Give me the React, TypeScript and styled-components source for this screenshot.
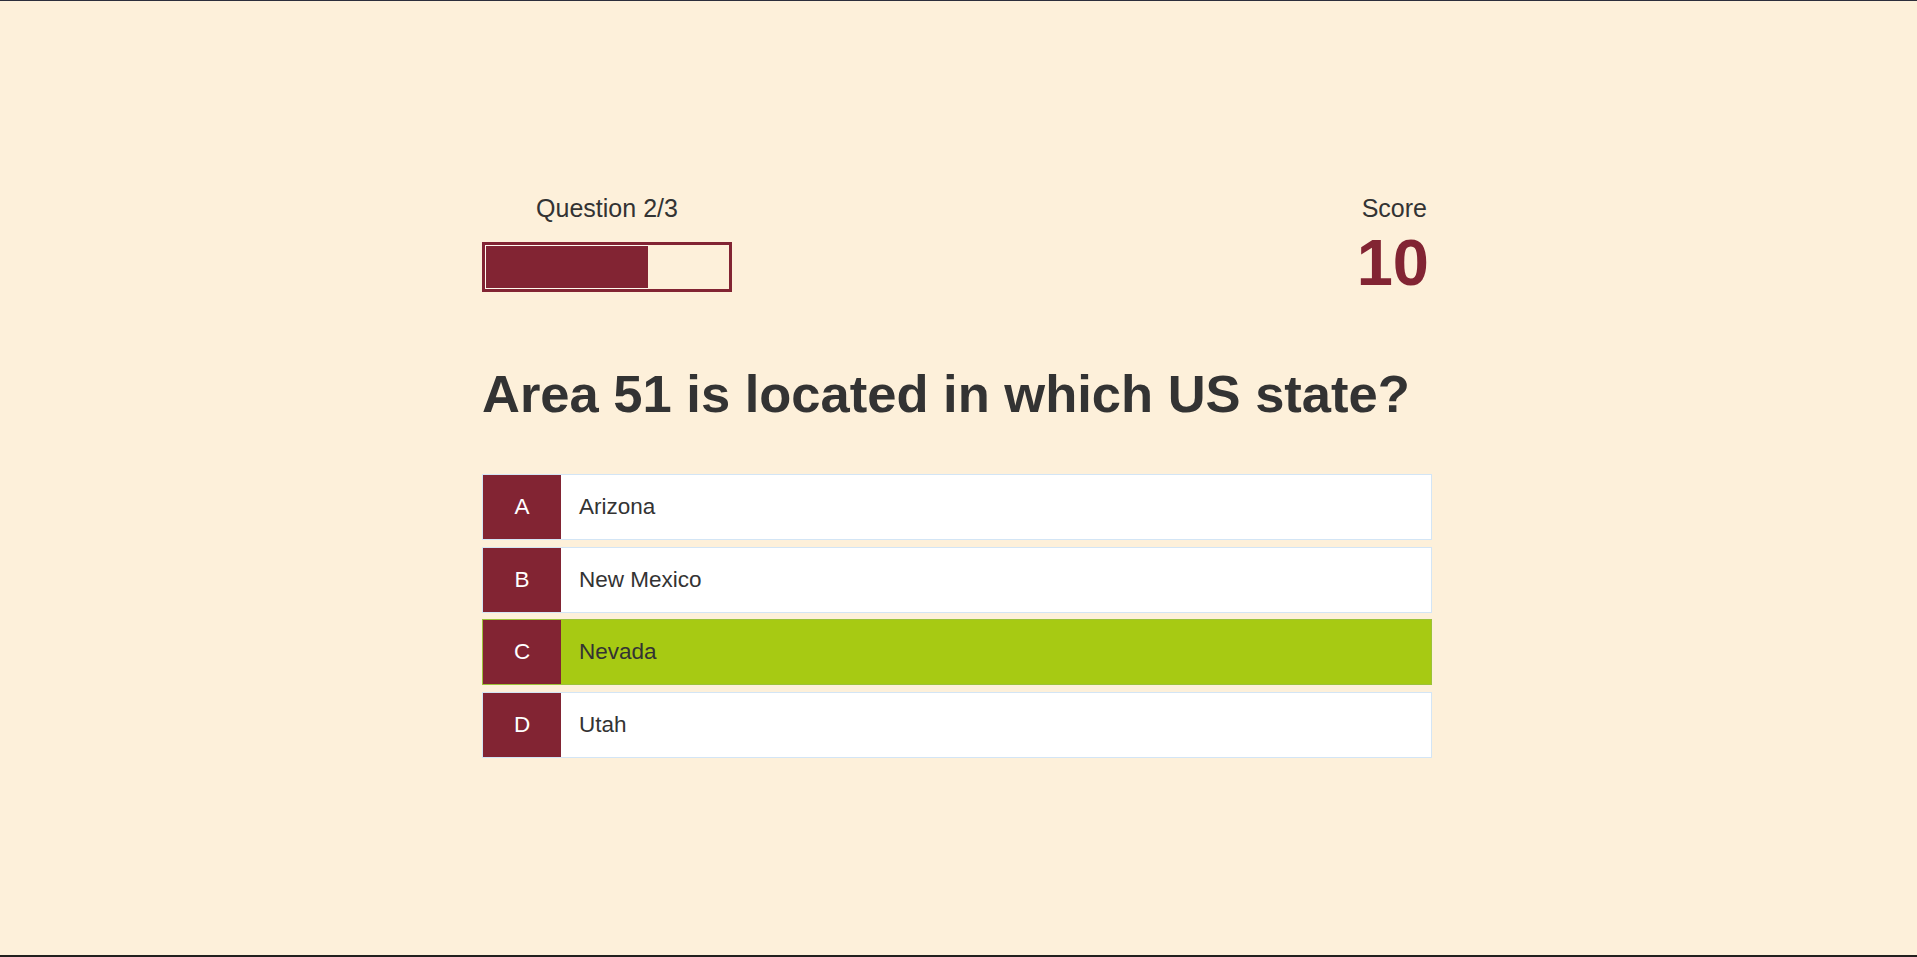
import { ReactElement } from 'react';
import styled, { createGlobalStyle } from 'styled-components';

interface IAnswer {
    letter: string;
    text: string;
    correct?: boolean;
}

const answers: IAnswer[] = [
    { letter: 'A', text: 'Arizona' },
    { letter: 'B', text: 'New Mexico' },
    { letter: 'C', text: 'Nevada', correct: true },
    { letter: 'D', text: 'Utah' },
];

const current = 2;
const total = 3;
const score = 10;

export default function App(): ReactElement {
    return (
        <>
            <GlobalStyle />
            <Page>
                <Quiz>
                    <Header>
                        <ProgressBlock>
                            <Label>Question {current}/{total}</Label>
                            <Track>
                                <Fill style={{ width: `${(current / total) * 100}%` }} />
                            </Track>
                        </ProgressBlock>
                        <ScoreBlock>
                            <ScoreLabel>Score</ScoreLabel>
                            <ScoreValue>{score}</ScoreValue>
                        </ScoreBlock>
                    </Header>
                    <Question>Area 51 is located in which US state?</Question>
                    <AnswerList>
                        {
                            answers.map(answer => (
                                <AnswerRow key={answer.letter} $correct={answer.correct}>
                                    <Letter>{answer.letter}</Letter>
                                    <AnswerText>{answer.text}</AnswerText>
                                </AnswerRow>
                            ))
                        }
                    </AnswerList>
                </Quiz>
            </Page>
        </>
    );
}

const GlobalStyle = createGlobalStyle`
html, body {
    margin: 0;
    padding: 0;
    background: #fdf0da;
    font-family: "Liberation Sans", Arial, sans-serif;
    color: #333;
}
`;

const Page = styled.div`
box-sizing: border-box;
height: 957px;
padding-right: 3px;
border-top: 1px solid #2c2e3b;
border-bottom: 2px solid #22201e;
background: #fdf0da;
overflow: hidden;
`;

const Quiz = styled.div`
width: 950px;
margin: 0 auto;
padding-top: 193px;
`;

const Header = styled.div`
display: flex;
justify-content: space-between;
align-items: flex-start;
`;

const ProgressBlock = styled.div`
display: flex;
flex-direction: column;
align-items: center;
width: 250px;
gap: 20px;
`;

const Label = styled.div`
font-size: 25px;
line-height: 28px;
color: #333;
`;

const ScoreLabel = styled(Label)`
margin-right: 2px;
`;

const Track = styled.div`
box-sizing: border-box;
width: 250px;
height: 50px;
border: 3px solid #822433;
display: flex;
`;

const Fill = styled.div`
box-sizing: border-box;
height: 100%;
background: #822433;
border: 1px solid #fff8ee;
border-right: none;
`;

const ScoreBlock = styled.div`
display: flex;
flex-direction: column;
align-items: flex-end;
gap: 8px;
padding-right: 3px;
`;

const ScoreValue = styled.div`
font-size: 65px;
line-height: 65px;
font-weight: bold;
color: #822433;
`;

const Question = styled.h1`
margin: 67px 0 48px;
font-size: 52.5px;
line-height: 64px;
font-weight: bold;
color: #333;
`;

const AnswerList = styled.div`
display: flex;
flex-direction: column;
gap: 6.5px;
`;

const AnswerRow = styled.div<{ $correct?: boolean }>`
box-sizing: border-box;
display: flex;
align-items: stretch;
height: 66px;
background: ${p => p.$correct ? '#a7ca13' : '#fff'};
border: 1px solid ${p => p.$correct ? '#9cc23a' : '#d3e5f5'};
cursor: pointer;
`;

const Letter = styled.div`
width: 78px;
display: flex;
align-items: center;
justify-content: center;
background: #822433;
color: #fff;
font-size: 22.5px;
`;

const AnswerText = styled.div`
display: flex;
align-items: center;
padding-left: 18px;
font-size: 22.5px;
color: #333;
`;
